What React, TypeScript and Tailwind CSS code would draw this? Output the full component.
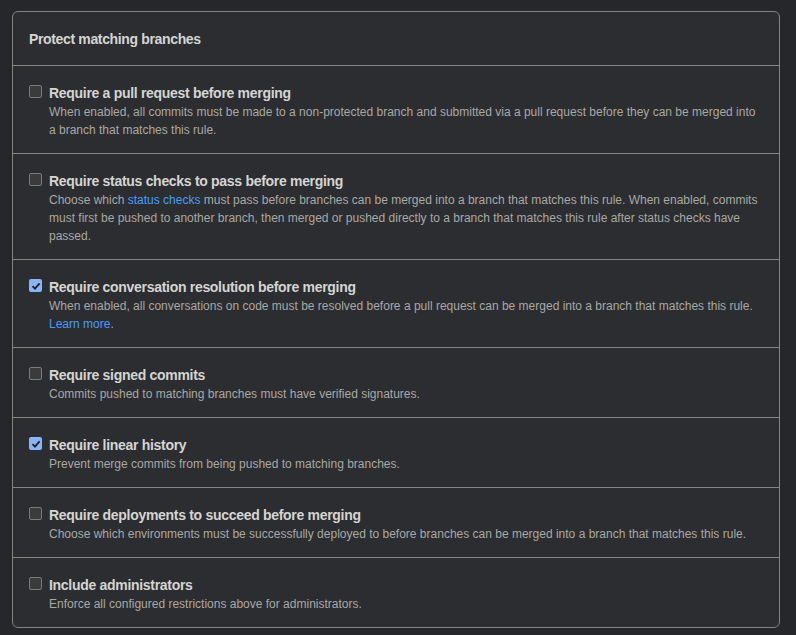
import React from 'react';

interface Rule {
  title: string;
  checked: boolean;
  desc: React.ReactNode;
}

const Link: React.FC<{ children: React.ReactNode }> = ({ children }) => (
  <a href="#" className="text-[#4c9cf7]">{children}</a>
);

const rules: Rule[] = [
  {
    title: 'Require a pull request before merging',
    checked: false,
    desc: 'When enabled, all commits must be made to a non-protected branch and submitted via a pull request before they can be merged into a branch that matches this rule.',
  },
  {
    title: 'Require status checks to pass before merging',
    checked: false,
    desc: (
      <>
        Choose which <Link>status checks</Link> must pass before branches can be merged into a branch that matches this rule. When enabled, commits must first be pushed to another branch, then merged or pushed directly to a branch that matches this rule after status checks have passed.
      </>
    ),
  },
  {
    title: 'Require conversation resolution before merging',
    checked: true,
    desc: (
      <>
        When enabled, all conversations on code must be resolved before a pull request can be merged into a branch that matches this rule. <Link>Learn more</Link>.
      </>
    ),
  },
  {
    title: 'Require signed commits',
    checked: false,
    desc: 'Commits pushed to matching branches must have verified signatures.',
  },
  {
    title: 'Require linear history',
    checked: true,
    desc: 'Prevent merge commits from being pushed to matching branches.',
  },
  {
    title: 'Require deployments to succeed before merging',
    checked: false,
    desc: 'Choose which environments must be successfully deployed to before branches can be merged into a branch that matches this rule.',
  },
  {
    title: 'Include administrators',
    checked: false,
    desc: 'Enforce all configured restrictions above for administrators.',
  },
];

const Checkbox: React.FC<{ checked: boolean }> = ({ checked }) =>
  checked ? (
    <span className="mt-[2px] flex h-[13px] w-[13px] shrink-0 items-center justify-center rounded-[2px] bg-[#8ab4f8]">
      <svg width="10" height="10" viewBox="0 0 10 10" fill="none">
        <path d="M1.5 5.2 L4 7.6 L8.6 2.4" stroke="#202124" strokeWidth="1.8" />
      </svg>
    </span>
  ) : (
    <span className="mt-[2px] h-[13px] w-[13px] shrink-0 rounded-[2px] border border-[#7b7b7b] bg-[#3b3b3b]" />
  );

const App: React.FC = () => {
  return (
    <div className="min-h-[635px] bg-[#25272b] pt-[11px] pl-3 font-['Liberation_Sans',sans-serif]">
      <div className="w-[768px] rounded-md border border-[#86847e] bg-[#2b2d31]">
        <div className="border-b border-[#86847e] px-4 pt-[17px] pb-[15px]">
          <h2 className="text-sm leading-[21px] font-bold tracking-[-0.35px] text-[#d5d5d2]">Protect matching branches</h2>
        </div>
        {rules.map((rule, i) => (
          <div
            key={rule.title}
            className={`flex gap-[7px] px-4 pt-[17px] pb-[14px] ${i < rules.length - 1 ? 'border-b border-[#86847e]' : ''}`}
          >
            <Checkbox checked={rule.checked} />
            <div className="min-w-0">
              <p className="text-sm leading-[20px] font-bold tracking-[-0.3px] text-[#d5d5d2]">{rule.title}</p>
              <p className="text-xs leading-[18px] text-[#a9a9a3]">{rule.desc}</p>
            </div>
          </div>
        ))}
      </div>
    </div>
  );
};

export default App;
